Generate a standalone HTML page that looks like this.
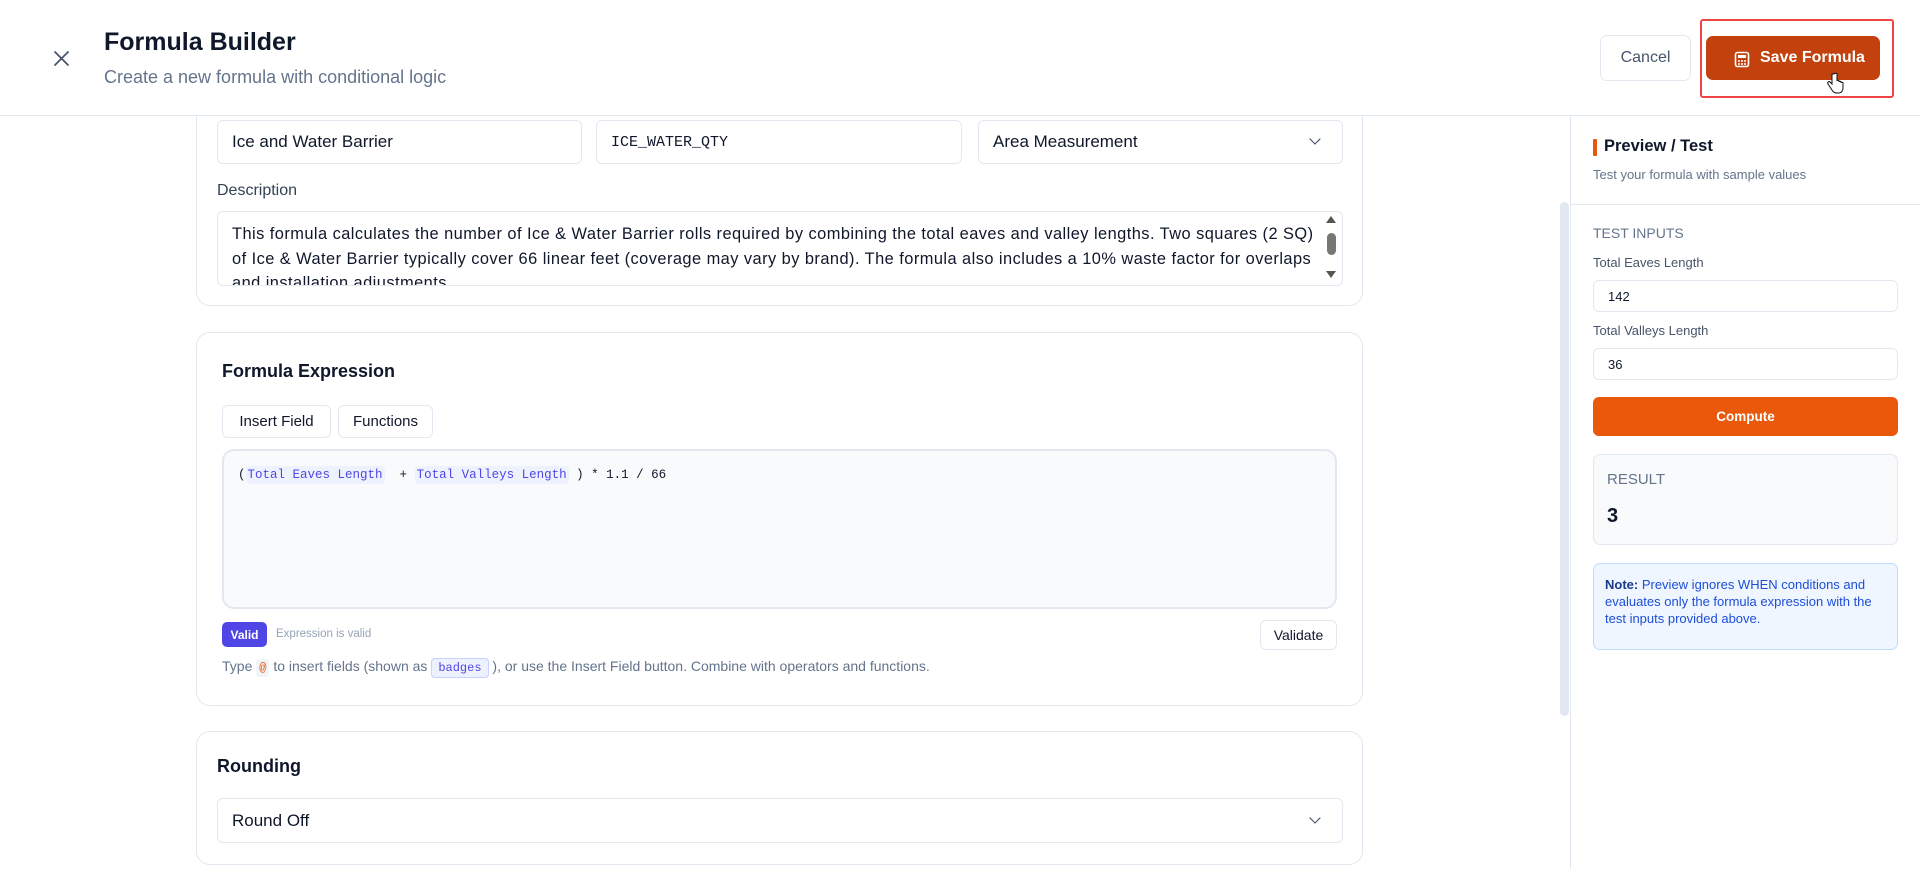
<!DOCTYPE html>
<html><head><meta charset="utf-8"><style>
*{box-sizing:border-box;margin:0;padding:0}
body{width:1920px;height:869px;overflow:hidden;background:#fff;font-family:"Liberation Sans",sans-serif;color:#0f172a;position:relative}
.a{position:absolute}
.card{position:absolute;left:196px;width:1167px;border:1px solid #e2e8f0;border-radius:14px;background:#fff}
.inp{position:absolute;border:1px solid #e2e8f0;border-radius:6px;background:#fff;font-size:17px;padding-left:14px;display:flex;align-items:center;color:#0f172a}
.btn{position:absolute;border:1px solid #e2e8f0;border-radius:6px;background:#fff;font-size:15px;display:flex;align-items:center;justify-content:center;color:#0f172a}
.mono{font-family:"Liberation Mono",monospace}
.chip{background:#eef2ff;color:#4f46e5;border-radius:4px;padding:2px 2px}
.lbl{position:absolute;font-size:13px;color:#475569}
.chev{position:absolute;width:8px;height:8px;border-right:1.6px solid #334155;border-bottom:1.6px solid #334155;transform:rotate(45deg)}
</style></head><body>
<div class="card" style="top:90px;height:216px;border-top:none;border-radius:0 0 14px 14px"></div>
<div class="a" style="left:0;top:0;width:1920px;height:116px;background:#fff;border-bottom:1px solid #e2e8f0"></div>

<svg class="a" style="left:53px;top:50px" width="17" height="17" viewBox="0 0 17 17"><path d="M2 2L15 15M15 2L2 15" stroke="#475569" stroke-width="1.8" stroke-linecap="round"/></svg>
<div class="a" style="left:104px;top:28px;font-size:25px;font-weight:bold;color:#0f172a">Formula Builder</div>
<div class="a" style="left:104px;top:67px;font-size:18px;color:#64748b">Create a new formula with conditional logic</div>
<div class="btn" style="left:1600px;top:35px;width:91px;height:46px;font-size:16px;color:#475569;border-radius:7px">Cancel</div>
<div class="a" style="left:1700px;top:19px;width:194px;height:79px;border:2px solid #ef4444;border-radius:3px"></div>
<div class="a" style="left:1706px;top:36px;width:174px;height:44px;background:#c2410c;border-radius:7px;color:#fff;font-size:16px;font-weight:bold;display:flex;align-items:center;padding-left:54px">Save Formula</div>
<svg class="a" style="left:1734px;top:51px" width="16" height="17" viewBox="0 0 16 17"><rect x="1.5" y="1.5" width="13" height="14" rx="2" fill="none" stroke="#fff" stroke-width="1.6"/><rect x="4" y="4" width="8" height="3" fill="#fff"/><circle cx="5" cy="10" r="1" fill="#fff"/><circle cx="8" cy="10" r="1" fill="#fff"/><circle cx="11" cy="10" r="1" fill="#fff"/><circle cx="5" cy="13" r="1" fill="#fff"/><circle cx="8" cy="13" r="1" fill="#fff"/><circle cx="11" cy="13" r="1" fill="#fff"/></svg>
<svg class="a" style="left:1826px;top:72px" width="18" height="22" viewBox="0 0 18 22"><path d="M6 2v10l-2-2c-1-1-3 0-2 2l4 6c1 2 3 3 5 3h2c2 0 4-2 4-5v-5c0-1-2-1-2 0v-1c0-1-2-1-2 0v-1c0-1-2-1-2 0V2c0-1-3-1-3 0z" fill="#fff" stroke="#111" stroke-width="1"/></svg>

<div class="inp" style="left:217px;top:120px;width:365px;height:44px">Ice and Water Barrier</div>
<div class="inp mono" style="left:596px;top:120px;width:366px;height:44px;font-size:15px">ICE_WATER_QTY</div>
<div class="inp" style="left:978px;top:120px;width:365px;height:44px">Area Measurement</div>
<div class="chev" style="left:1311px;top:135px"></div>
<div class="a" style="left:217px;top:182px;font-size:16px;color:#334155">Description</div>
<div class="a" style="left:217px;top:211px;width:1126px;height:75px;border:1px solid #e2e8f0;border-radius:6px;overflow:hidden;padding:10px 0 0 14px;font-size:16.4px;letter-spacing:0.45px;line-height:24.5px;color:#0f172a;white-space:nowrap">This formula calculates the number of Ice &amp; Water Barrier rolls required by combining the total eaves and valley lengths. Two squares (2 SQ)<br>of Ice &amp; Water Barrier typically cover 66 linear feet (coverage may vary by brand). The formula also includes a 10% waste factor for overlaps<br>and installation adjustments.</div>
<div class="a" style="left:1326px;top:216px;width:0;height:0;border-left:5px solid transparent;border-right:5px solid transparent;border-bottom:7px solid #555"></div>
<div class="a" style="left:1327px;top:233px;width:9px;height:22px;background:#777;border-radius:5px"></div>
<div class="a" style="left:1326px;top:271px;width:0;height:0;border-left:5px solid transparent;border-right:5px solid transparent;border-top:7px solid #555"></div>

<div class="card" style="top:332px;height:374px"></div>
<div class="a" style="left:222px;top:361px;font-size:18px;font-weight:bold">Formula Expression</div>
<div class="btn" style="left:222px;top:405px;width:109px;height:33px">Insert Field</div>
<div class="btn" style="left:338px;top:405px;width:95px;height:33px">Functions</div>
<div class="a" style="left:222px;top:449px;width:1115px;height:160px;background:#f8fafc;border:2px solid #e2e8f0;border-radius:12px"></div>
<div class="a mono" style="left:238px;top:468px;font-size:12.5px;color:#0f172a;white-space:pre">(<span class="chip">Total Eaves Length</span>  + <span class="chip">Total Valleys Length</span> ) * 1.1 / 66</div>
<div class="a" style="left:222px;top:622px;width:45px;height:25px;background:#4f46e5;border-radius:5px;color:#fff;font-size:12px;font-weight:bold;display:flex;align-items:center;justify-content:center">Valid</div>
<div class="a" style="left:276px;top:628px;font-size:11.5px;color:#94a3b8">Expression is valid</div>
<div class="btn" style="left:1260px;top:620px;width:77px;height:30px;font-size:14px">Validate</div>
<div class="a" style="left:222px;top:658px;font-size:14px;color:#64748b;white-space:nowrap">Type <span class="mono" style="background:#f1f5f9;color:#ea580c;padding:2px 3px;border-radius:3px;font-size:12px">@</span> to insert fields (shown as <span class="mono" style="background:#eef2ff;color:#4f46e5;border:1px solid #c7d2fe;padding:2px 6px;border-radius:4px;font-size:12px">badges</span> ), or use the Insert Field button. Combine with operators and functions.</div>

<div class="card" style="top:731px;height:134px"></div>
<div class="a" style="left:217px;top:756px;font-size:18px;font-weight:bold">Rounding</div>
<div class="inp" style="left:217px;top:798px;width:1126px;height:45px">Round Off</div>
<div class="chev" style="left:1311px;top:814px"></div>

<div class="a" style="left:1560px;top:202px;width:9px;height:514px;background:#e2e8f0;border-radius:5px"></div>

<div class="a" style="left:1570px;top:116px;width:350px;height:753px;border-left:1px solid #e2e8f0;background:#fff"></div>
<div class="a" style="left:1593px;top:139px;width:4px;height:17px;background:#ea580c;border-radius:1px"></div>
<div class="a" style="left:1604px;top:137px;font-size:16.5px;font-weight:bold">Preview / Test</div>
<div class="a" style="left:1593px;top:167px;font-size:13px;color:#64748b">Test your formula with sample values</div>
<div class="a" style="left:1571px;top:204px;width:349px;height:1px;background:#e2e8f0"></div>
<div class="lbl" style="left:1593px;top:225px;font-size:14px;color:#64748b">TEST INPUTS</div>
<div class="lbl" style="left:1593px;top:255px">Total Eaves Length</div>
<div class="inp" style="left:1593px;top:280px;width:305px;height:32px;font-size:13px">142</div>
<div class="lbl" style="left:1593px;top:323px">Total Valleys Length</div>
<div class="inp" style="left:1593px;top:348px;width:305px;height:32px;font-size:13px">36</div>
<div class="a" style="left:1593px;top:397px;width:305px;height:39px;background:#ea580c;border-radius:6px;color:#fff;font-size:13.5px;font-weight:bold;display:flex;align-items:center;justify-content:center">Compute</div>
<div class="a" style="left:1593px;top:454px;width:305px;height:91px;background:#f8fafc;border:1px solid #e2e8f0;border-radius:7px"></div>
<div class="a" style="left:1607px;top:471px;font-size:15px;color:#64748b">RESULT</div>
<div class="a" style="left:1607px;top:505px;font-size:20px;font-weight:bold;color:#0f172a">3</div>
<div class="a" style="left:1593px;top:563px;width:305px;height:87px;background:#eff6ff;border:1px solid #bfdbfe;border-radius:7px;padding:12px 10px 0 11px;font-size:13px;line-height:17px;color:#1d4ed8"><b style="color:#1e3a8a">Note:</b> Preview ignores WHEN conditions and evaluates only the formula expression with the test inputs provided above.</div>
</body></html>
